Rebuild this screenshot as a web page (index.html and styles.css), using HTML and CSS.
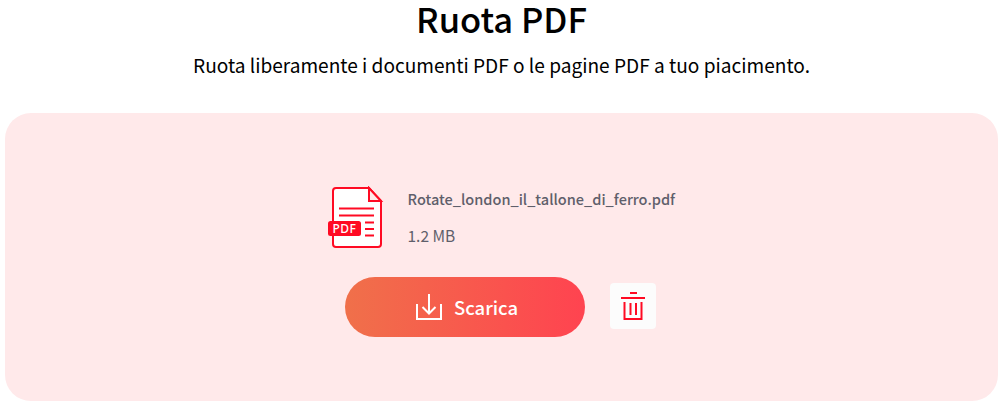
FILE: index.html
```html
<!DOCTYPE html>
<html lang="it">

<head>
  <meta charset="UTF-8">
  <meta name="viewport" content="width=device-width, initial-scale=1.0">
  <title>Ruota PDF</title>
  <link rel="stylesheet" href="styles.css">
</head>

<body>
  <div class="container">
    <h1>Ruota PDF</h1>
    <p class="subtitle">Ruota liberamente i documenti PDF o le pagine PDF a tuo piacimento.</p>
    <div class="result-box">
      <div class="file-info">
        <svg class="pdf-icon" width="56" height="63" viewBox="0 0 56 63" fill="none">
          <path d="M41 2H8a3 3 0 0 0-3 3v53a3 3 0 0 0 3 3h42a3 3 0 0 0 3-3V15z" fill="#fff" stroke="#ff0a23" stroke-width="2"/>
          <path d="M41 2V15H53z" fill="#ffe9ea" stroke="#ff0a23" stroke-width="2"/>
          <path d="M11 22.500H46M11 29.500H46M37 36.500H46M37 43H46M37 49.500H46" stroke="#ff0a23" stroke-width="2"/>
          <rect x="0" y="35" width="33" height="15" rx="2.500" fill="#ff0a23"/>
          <text x="16.500" y="47" class="pdf-label" text-anchor="middle">PDF</text>
        </svg>
        <div class="file-text">
          <div class="file-name">Rotate_london_il_tallone_di_ferro.pdf</div>
          <div class="file-size">1.2 MB</div>
        </div>
      </div>
      <div class="actions">
        <button class="download">
          <svg width="26" height="26" viewBox="0 0 26 26" fill="none" stroke="#fff" stroke-width="2">
            <path d="M1 10V25H25V10"/>
            <path d="M13 0V19.500M6.500 13L13 19.500L19.500 13"/>
          </svg>
          Scarica
        </button>
        <button class="trash">
          <svg width="24" height="30" viewBox="0 0 24 30" fill="none" stroke="#ff0a23" stroke-width="2">
            <path d="M9 2H16M0 7H24M3.500 11V28H20.500V11M9.500 12V24M15 12V24"/>
          </svg>
        </button>
      </div>
    </div>
  </div>
</body>

</html>
```

FILE: styles.css
```css
* {
  margin: 0;
  padding: 0;
  box-sizing: border-box;
}

body {
  background-color: #fff;
  font-family: "Noto Sans CJK SC", "Noto Sans", sans-serif;
  color: #000;
  overflow: hidden;
}

.container {
  padding: 0 5px 4px;
  text-align: center;
}

h1 {
  font-size: 34.500px;
  font-weight: 500;
  line-height: 36px;
}

.subtitle {
  margin-top: 15px;
  font-size: 19.100px;
  line-height: 28px;
}

.result-box {
  display: flex;
  flex-direction: column;
  align-items: center;
  height: 288px;
  margin-top: 34px;
  padding-top: 73px;
  background-color: #ffe9ea;
  border-radius: 26px;
}

.file-info {
  display: flex;
  gap: 24px;
  width: 348px;
  text-align: left;
}

.pdf-icon {
  flex-shrink: 0;
}

.file-text {
  padding-top: 1px;
  color: #5f5f6b;
  font-size: 14.550px;
}

.file-name {
  font-weight: 500;
  line-height: 24px;
}

.file-size {
  margin-top: 12px;
  font-size: 15.500px;
  line-height: 24px;
}

.pdf-label {
  fill: #fff;
  font-family: "Noto Sans", sans-serif;
  font-size: 12px;
  font-weight: 500;
  letter-spacing: 0.5px;
}

.actions {
  display: flex;
  align-items: flex-start;
  gap: 25px;
  margin-top: 28px;
  margin-right: 2px;
}

.download {
  display: flex;
  justify-content: center;
  align-items: center;
  gap: 12px;
  width: 240px;
  height: 60px;
  padding-left: 4px;
  border: none;
  border-radius: 30px;
  background: linear-gradient(90deg, #f0704a, #ff4350);
  color: #fff;
  font-family: inherit;
  font-size: 18.500px;
  font-weight: 500;
}

.trash {
  display: flex;
  justify-content: center;
  align-items: center;
  width: 46px;
  height: 46px;
  margin-top: 6px;
  border: none;
  border-radius: 4px;
  background-color: #fcfcfc;
}
```
